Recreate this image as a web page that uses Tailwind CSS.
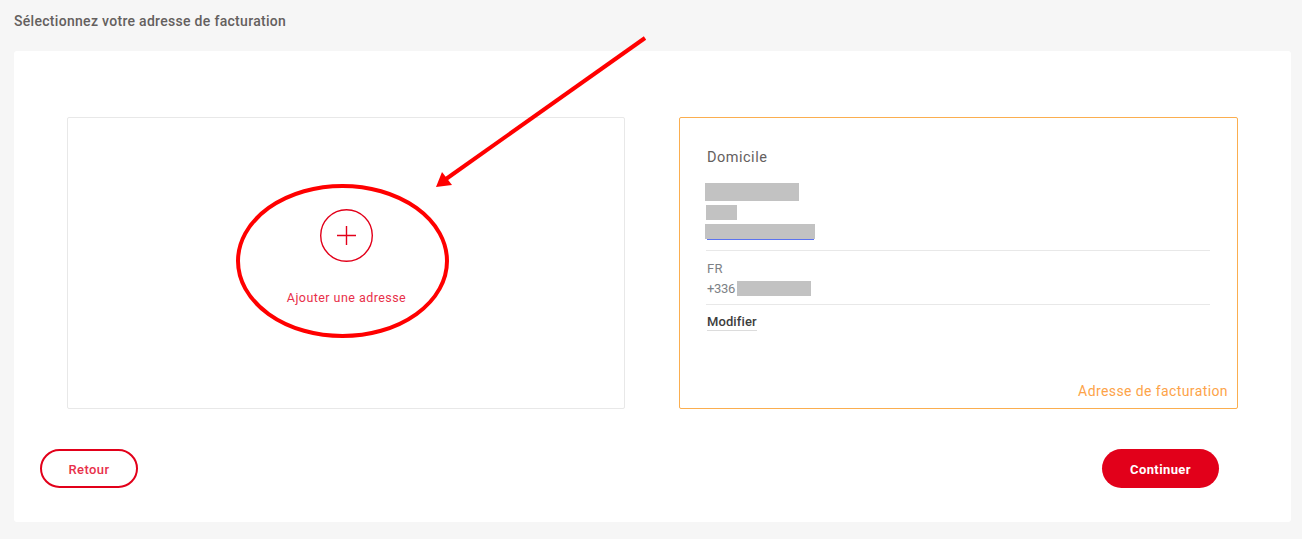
<!DOCTYPE html>
<html class="h-full">
<head>
    <meta charset="UTF-8">
    <meta name="viewport" content="width=device-width, initial-scale=1.0">
    <script src="https://cdn.jsdelivr.net/npm/@tailwindcss/browser@4"></script>
</head>
<body class="relative h-[539px] overflow-hidden bg-[#f6f6f6] font-['Roboto',sans-serif]">
<main class="px-[14px]">
    <h1 class="h-[51px] pt-[12px] text-[14px] leading-[18px] font-medium tracking-[0.3px] text-[#64605e]">Sélectionnez votre adresse de facturation</h1>

    <section class="h-[471px] w-[1277px] rounded-[3px] bg-white">
        <div class="flex gap-[54px] pt-[66px] pl-[53px]">
            <!-- add address -->
            <div class="flex h-[292px] w-[558px] flex-col items-center rounded-[2px] border border-[#e8e8e8] pt-[91px]">
                <svg class="h-[53px] w-[53px]" viewBox="0 0 53 53" fill="none" stroke="#e2001a" stroke-width="1.4">
                    <circle cx="26.5" cy="26.5" r="25.8"/>
                    <path d="M17 26.5H36M26.5 17V36"/>
                </svg>
                <p class="mt-[27px] pl-[1px] text-[12.5px] leading-[18px] tracking-[0.45px] text-[#e8304a]">Ajouter une adresse</p>
            </div>

            <!-- billing address -->
            <div class="relative h-[292px] w-[559px] rounded-[2px] border border-[#fbae4f] pt-[30px] pr-[27px] pl-[26px]">
                <h2 class="mt-[1px] -mb-[1px] ml-[1px] text-[14.5px] leading-[18px] tracking-[0.5px] text-[#64605e]">Domicile</h2>
                <div class="mt-[17px] -ml-[1px] h-[18px] w-[94px] bg-[#c2c2c2]"></div>
                <div class="mt-[4px] h-[15px] w-[31px] bg-[#c2c2c2]"></div>
                <div class="mt-[4px] -ml-[1px] h-[15px] w-[110px] bg-[#c2c2c2]"></div>
                <div class="ml-[1px] h-[1px] w-[107px] bg-[#5b73f0]"></div>
                <div class="mt-[10px] border-t border-[#e8e8e8] pt-[8px] pb-[5px] pl-[1px] text-[13px] leading-[20px] tracking-[0.2px] text-[#7d8186]">
                    <p>FR</p>
                    <p class="flex items-center"><span class="tracking-[-0.3px]">+336</span><span class="mt-[-1px] ml-[2px] h-[15px] w-[74px] bg-[#c2c2c2]"></span></p>
                </div>
                <div class="flex border-t border-[#e8e8e8] pt-[9px]">
                    <a class="ml-[1px] border-b border-[#dcdcdc] text-[13px] leading-[16px] font-medium tracking-[0.1px] text-[#3d3d3d]">Modifier</a>
                </div>
                <span class="absolute right-[9px] bottom-[8px] text-[14px] leading-[18px] tracking-[0.4px] text-[#fda349]">Adresse de facturation</span>
            </div>
        </div>

        <div class="mt-[40px] flex justify-between pr-[72px] pl-[26px]">
            <button class="h-[39px] w-[98px] rounded-full border-2 border-[#e2001a] pt-[2px] text-[13px] font-medium tracking-[0.4px] text-[#e8304a]">Retour</button>
            <button class="h-[39px] w-[117px] rounded-full bg-[#e2001a] pt-[2px] text-[13px] font-bold tracking-[0.4px] text-white">Continuer</button>
        </div>
    </section>
</main>

<!-- red annotation drawn over the page -->
<svg class="pointer-events-none absolute top-0 left-0 h-[539px] w-[1302px]" viewBox="0 0 1302 539" fill="none">
    <ellipse cx="342.5" cy="261" rx="104.5" ry="75" stroke="#ff0000" stroke-width="4"/>
    <path d="M645 38L446 179" stroke="#ff0000" stroke-width="4"/>
    <path d="M436 187L442 172L452 185Z" fill="#ff0000"/>
</svg>
</body>
</html>
